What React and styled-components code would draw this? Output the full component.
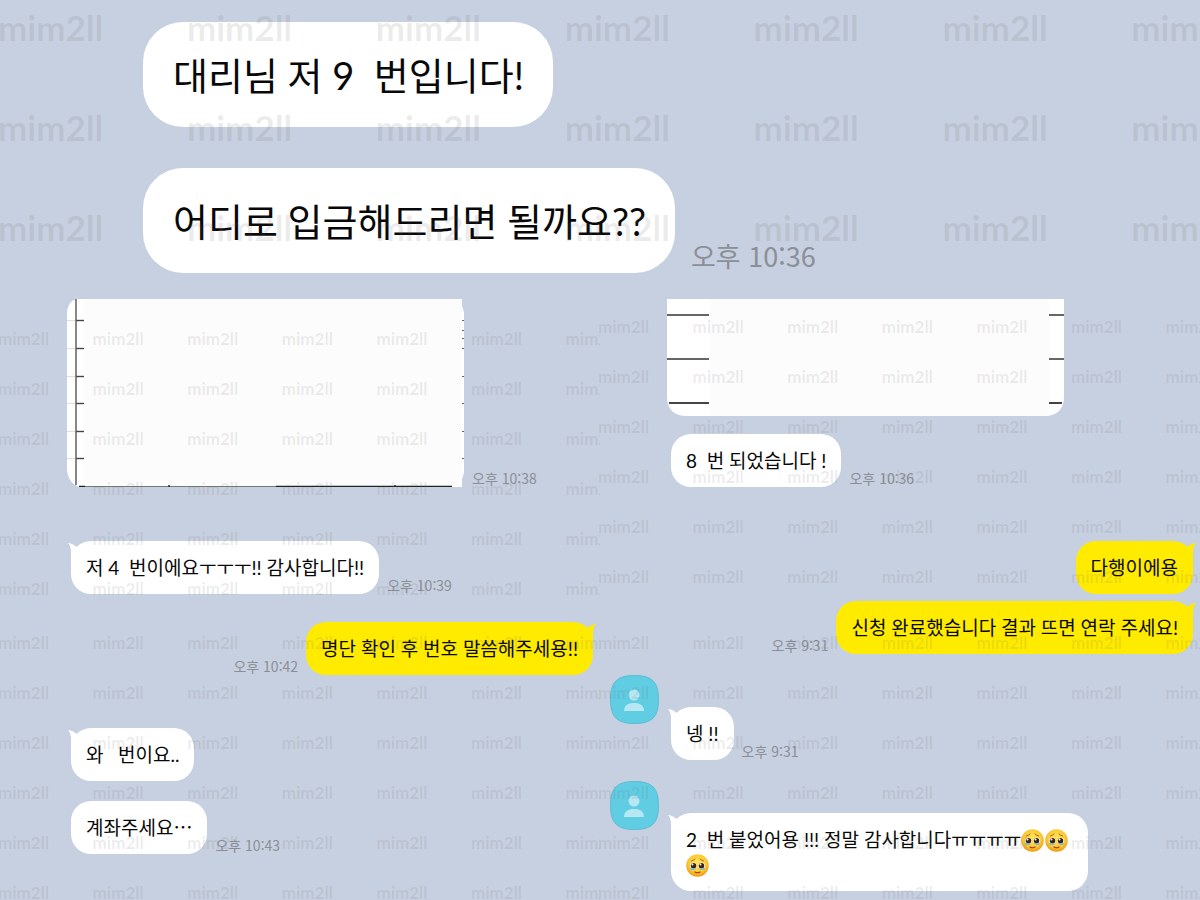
import React from "react";
import styled, { createGlobalStyle } from "styled-components";

const GlobalStyle = createGlobalStyle`
  * {
    box-sizing: border-box;
  }
  body {
    margin: 0;
    background-color: #c7d0e0;
    font-family: "Noto Sans CJK KR", "Noto Sans", sans-serif;
    color: #080808;
  }
`;

const Board = styled.main`
  display: grid;
  grid-template-columns: 1fr 1fr;
  overflow: hidden;
`;

const Panel = styled.section`
  position: relative;
  display: flex;
  flex-direction: column;
  padding: ${(props) => props.$top || 0}px 7px ${(props) => props.$bottom || 0}px 0;
`;

const HeroPanel = styled(Panel)`
  grid-column: 1 / -1;
  gap: 41px;
  padding-left: 143px;
`;

const Row = styled.div`
  display: flex;
  align-items: flex-end;
  gap: ${(props) => (props.$large ? 16 : 8)}px;
  margin-top: ${(props) => props.$space || 0}px;
  padding-left: ${(props) => props.$indent || 0}px;
  flex-direction: ${(props) => (props.$mine ? "row-reverse" : "row")};
`;

const AvatarRow = styled.div`
  display: flex;
  align-items: flex-start;
  gap: 12px;
  margin-top: 21px;
  padding-left: 10px;
`;

const Received = styled(Row)`
  margin-top: 32px;
`;

const Bubble = styled.p`
  position: relative;
  margin: 0;
  max-width: 417px;
  padding: 14px 15px;
  border-radius: 20px;
  background-color: ${(props) => (props.$mine ? "#ffeb00" : "#fff")};
  font-family: Lato, "Noto Sans CJK KR", sans-serif;
  font-size: 19px;
  line-height: 25px;
  white-space: pre-wrap;
`;

const LargeBubble = styled(Bubble)`
  max-width: none;
  padding: 28px 29px 26px 30px;
  border-radius: 40px;
  font-size: 38px;
  line-height: 51px;
`;

const TailShape = styled.svg`
  position: absolute;
  top: 0;
  ${(props) => (props.$mine ? "right: -3px; transform: scaleX(-1);" : "left: -3px;")}
`;

const Time = styled.time`
  flex-shrink: 0;
  color: #8b8f96;
  font-size: ${(props) => (props.$large ? 27 : 14)}px;
  line-height: ${(props) => (props.$large ? 34 : 18)}px;
`;

const Sheet = styled.svg`
  display: block;
  flex: 0 1 397px;
  min-width: 0;
  height: auto;
`;

const Avatar = styled.svg`
  flex-shrink: 0;
`;

const EmojiFace = styled.svg`
  display: inline-block;
  margin-right: 1px;
  vertical-align: -5px;
`;

const MarkLayer = styled.div`
  position: absolute;
  inset: 0 0 0 -2px;
  overflow: hidden;
  pointer-events: none;
`;

const MarkGrid = styled.div`
  display: grid;
  grid-template-columns: repeat(7, 1fr);
  width: 110%;
  margin-top: ${(props) => props.$offset}px;
  color: rgba(100, 100, 100, 0.12);
  font-family: Lato, "Liberation Sans", sans-serif;
  font-weight: 700;
  font-size: ${(props) => (props.$large ? 35 : 17)}px;
  line-height: ${(props) => (props.$large ? 100 : 50)}px;
`;

const Marks = ({ offset, large }) => (
  <MarkLayer aria-hidden="true">
    <MarkGrid $offset={offset} $large={large}>
      {Array.from({ length: large ? 21 : 49 }, (_, i) => (
        <span key={i}>mim2ll</span>
      ))}
    </MarkGrid>
  </MarkLayer>
);

const Tail = ({ mine }) => (
  <TailShape $mine={mine} width="14" height="22" viewBox="0 0 14 22">
    <path
      d="M0 2 C5 2.5 7 5 9 6 L14 10 L3 22 L3 12 C3 7 2 4 0 2Z"
      fill={mine ? "#ffeb00" : "#fff"}
    />
  </TailShape>
);

const Profile = () => (
  <Avatar width="49" height="49" viewBox="0 0 49 49" role="img" aria-label="프로필">
    <path
      d="M24.5 .5 C42 .5 48.5 7 48.5 24.5 C48.5 42 42 48.5 24.5 48.5 C7 48.5 .5 42 .5 24.5 C.5 7 7 .5 24.5 .5Z"
      fill="#60cde3"
      stroke="#58bdd3"
    />
    <circle cx="24" cy="20" r="5.5" fill="#b5e8f2" />
    <path d="M14 36 C14 30.5 18 28 24 28 C30 28 34 30.5 34 36Z" fill="#b5e8f2" />
  </Avatar>
);

const Emoji = () => (
  <EmojiFace width="23" height="23" viewBox="0 0 46 46" role="img" aria-label="울먹이는 얼굴">
    <defs>
      <radialGradient id="face" cx="50%" cy="40%" r="60%">
        <stop offset="0" stopColor="#ffe45c" />
        <stop offset="0.65" stopColor="#fccb35" />
        <stop offset="1" stopColor="#ef9716" />
      </radialGradient>
    </defs>
    <circle cx="23" cy="23" r="22.5" fill="url(#face)" />
    <path d="M11 14 Q15 13 18 10 M35 14 Q31 13 28 10" fill="none" stroke="#a7621a" strokeWidth="2" strokeLinecap="round" />
    <circle cx="14.5" cy="24" r="6.5" fill="#fff" />
    <circle cx="31.5" cy="24" r="6.5" fill="#fff" />
    <circle cx="15" cy="23.5" r="5.5" fill="#3b211b" />
    <circle cx="31" cy="23.5" r="5.5" fill="#3b211b" />
    <circle cx="13" cy="21" r="2" fill="#fff" />
    <circle cx="29" cy="21" r="2" fill="#fff" />
    <path d="M8 27 Q14 30 20 28 Q19 32 14 32 Q8 32 8 27Z M26 28 Q32 30 38 27 Q38 32 32 32 Q27 32 26 28Z" fill="#6fb9c4" />
    <path d="M18 36 Q23 39 28 36" fill="none" stroke="#a23b16" strokeWidth="2.4" strokeLinecap="round" />
  </EmojiFace>
);

const rowLines = [22, 50, 78, 105, 133, 160];
const edgeTicks = [22, 32, 40, 50, 78, 105, 133, 160];

const TallSheet = () => (
  <Sheet viewBox="0 0 397 189" role="img" aria-label="명단 사진">
    <path d="M9 1 H395 V8 L397 14 V175 L395 181 V189 H12 Q0 184 0 170 V16 Q0 4 9 1Z" fill="#fff" />
    <path d="M17 1 H395 V188 H17Z" fill="#fcfcfc" />
    {rowLines.map((y) => (
      <g key={y}>
        <path d={`M0 ${y + 0.5} H8`} stroke="#ddd" />
        <path d={`M9 ${y + 0.5} H17`} stroke="#444" strokeWidth="1.4" />
      </g>
    ))}
    {edgeTicks.map((y) => (
      <path key={y} d={`M395 ${y + 0.5} H397`} stroke="#666" />
    ))}
    <path d="M9 1 V187" stroke="#555" strokeWidth="1.4" />
    <path d="M12 188.5 H209" stroke="#777" />
    <path d="M12 188.5 H18 M209 188.5 H385 M102 187 V189 M328 187 V189" stroke="#222" strokeWidth="1.4" />
  </Sheet>
);

const WideSheet = () => (
  <Sheet viewBox="0 0 397 117" role="img" aria-label="명단 사진">
    <path d="M0 0 H397 V97 Q397 117 377 117 H20 Q0 117 0 97Z" fill="#fff" />
    <path d="M42 0 H382 V117 H42Z" fill="#fcfcfc" />
    <path d="M0 16 H42 M382 16 H397 M0 60 H42 M382 60 H397" stroke="#666" strokeWidth="2" />
    <path d="M2 104 H42 M382 104 H395" stroke="#444" strokeWidth="2" />
  </Sheet>
);

const App = () => (
  <>
    <GlobalStyle />
    <Board lang="ko">
      <HeroPanel $top={22} $bottom={25}>
        <Row $large>
          <LargeBubble>{"대리님 저 9  번입니다!"}</LargeBubble>
        </Row>
        <Row $large>
          <LargeBubble>어디로 입금해드리면 될까요??</LargeBubble>
          <Time $large>오후 10:36</Time>
        </Row>
        <Marks large offset={-23} />
      </HeroPanel>

      <Panel $bottom={6}>
        <Row $indent={67}>
          <TallSheet />
          <Time>오후 10:38</Time>
        </Row>
        <Row $indent={71} $space={54}>
          <Bubble>
            <Tail />
            {"저 4  번이에요ㅜㅜㅜ!! 감사합니다!!"}
          </Bubble>
          <Time>오후 10:39</Time>
        </Row>
        <Marks offset={16} />
      </Panel>

      <Panel $top={1} $bottom={6}>
        <Row $indent={67}>
          <WideSheet />
        </Row>
        <Row $indent={71} $space={18}>
          <Bubble>{"8  번 되었습니다 !"}</Bubble>
          <Time>오후 10:36</Time>
        </Row>
        <Row $mine $space={54}>
          <Bubble $mine>
            <Tail mine />
            다행이에용
          </Bubble>
        </Row>
        <Marks offset={4} />
      </Panel>

      <Panel $top={22} $bottom={46}>
        <Row $mine>
          <Bubble $mine>
            <Tail mine />
            명단 확인 후 번호 말씀해주세용!!
          </Bubble>
          <Time>오후 10:42</Time>
        </Row>
        <Row $indent={71} $space={53}>
          <Bubble>
            <Tail />
            {"와   번이요.."}
          </Bubble>
        </Row>
        <Row $indent={71} $space={20}>
          <Bubble>계좌주세요⋯</Bubble>
          <Time>오후 10:43</Time>
        </Row>
        <Marks offset={-32} />
      </Panel>

      <Panel $top={1} $bottom={9}>
        <Row $mine>
          <Bubble $mine>
            <Tail mine />
            신청 완료했습니다 결과 뜨면 연락 주세요!
          </Bubble>
          <Time>오후 9:31</Time>
        </Row>
        <AvatarRow>
          <Profile />
          <Received>
            <Bubble>
              <Tail />
              넹 !!
            </Bubble>
            <Time>오후 9:31</Time>
          </Received>
        </AvatarRow>
        <AvatarRow>
          <Profile />
          <Received>
            <Bubble>
              <Tail />
              {"2  번 붙었어용 !!! 정말 감사합니다ㅠㅠㅠㅠ"}
              <Emoji />
              <Emoji />
              <Emoji />
            </Bubble>
          </Received>
        </AvatarRow>
        <Marks offset={-32} />
      </Panel>
    </Board>
  </>
);

export default App;
